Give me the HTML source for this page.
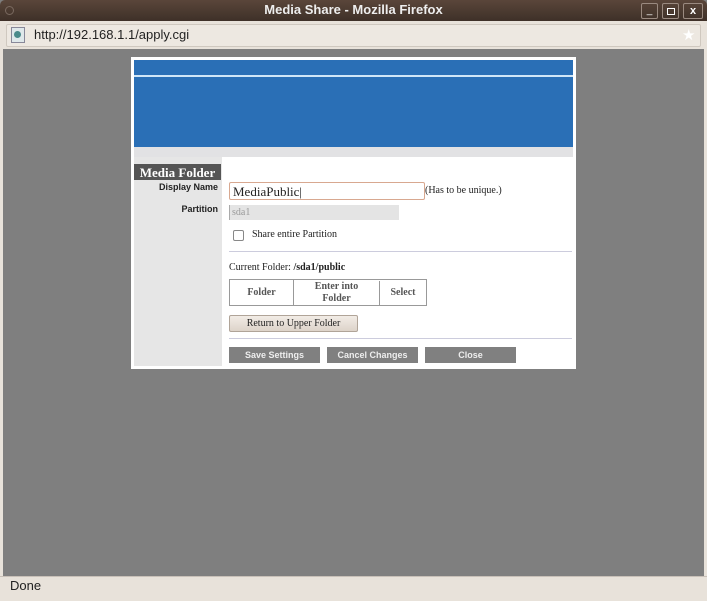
<!DOCTYPE html><html><head><style>
body{margin:0;width:707px;height:600px;overflow:hidden;background:#7f7f7f;font-family:"Liberation Sans",sans-serif;position:relative}
.a{position:absolute}
.serif{font-family:"Liberation Serif",serif}
</style></head><body>
<div class="a" style="left:0;top:0;width:707px;height:21px;background:linear-gradient(#5a463a,#3e3028);border-radius:5px 5px 0 0"></div>
<div class="a" style="left:0;top:2px;width:707px;text-align:center;color:#eee;font-weight:bold;font-size:13px">Media Share - Mozilla Firefox</div>
<div class="a" style="left:5px;top:6px;width:7px;height:7px;border-radius:50%;border:1px solid #7a6a60"></div>
<div class="a" style="left:641px;top:3px;width:15px;height:14px;border:1px solid #9a8a80;border-radius:2px;color:#fff;font-size:10px;text-align:center;line-height:13px">_</div>
<div class="a" style="left:662px;top:3px;width:15px;height:14px;border:1px solid #9a8a80;border-radius:2px"><div style="margin:4px;width:6px;height:5px;border:1px solid #fff"></div></div>
<div class="a" style="left:683px;top:3px;width:18px;height:14px;border:1px solid #9a8a80;border-radius:2px;color:#fff;font-size:11px;text-align:center;line-height:14px;font-weight:bold">x</div>
<div class="a" style="left:0;top:21px;width:707px;height:28px;background:#e8e2da"></div>
<div class="a" style="left:6px;top:24px;width:693px;height:21px;background:#ede8e1;border:1px solid #cfc8bf;border-radius:2px"></div>
<div class="a" style="left:11px;top:27px;width:12px;height:14px;background:#dfe8ea;border:1px solid #889"><div style="margin:3px 2px;width:7px;height:7px;border-radius:50%;background:#4a8a8a"></div></div>
<div class="a" style="left:34px;top:27px;font-size:13px;color:#222">http://192.168.1.1/apply.cgi</div>
<div class="a" style="left:682px;top:26px;color:#fff;font-size:15px">★</div>
<div class="a" style="left:0;top:49px;width:3px;height:527px;background:#e8e2da"></div>
<div class="a" style="left:704px;top:49px;width:3px;height:527px;background:#e8e2da"></div>
<div class="a" style="left:0;top:576px;width:707px;height:24px;background:#e8e2da;border-top:1px solid #c8c0b8"></div>
<div class="a" style="left:10px;top:578px;font-size:13px;color:#222">Done</div>

<div class="a" style="left:131px;top:57px;width:445px;height:312px;background:#fff"></div>
<div class="a" style="left:134px;top:60px;width:439px;height:15px;background:#2a6fb6"></div>
<div class="a" style="left:134px;top:75px;width:439px;height:2px;background:#cfe6f8"></div>
<div class="a" style="left:134px;top:77px;width:439px;height:70px;background:#2a6fb6"></div>
<div class="a" style="left:134px;top:147px;width:439px;height:10px;background:#e2e2e4"></div>
<div class="a" style="left:134px;top:157px;width:88px;height:209px;background:#e6e6e6"></div>
<div class="a serif" style="left:134px;top:164px;width:87px;height:16px;background:#555;color:#fff;font-weight:bold;font-size:13px;text-align:center;line-height:17px">Media Folder</div>
<div class="a" style="left:134px;top:182px;width:84px;text-align:right;font-size:9px;font-weight:bold;color:#222">Display Name</div>
<div class="a" style="left:134px;top:204px;width:84px;text-align:right;font-size:9px;font-weight:bold;color:#222">Partition</div>
<div class="a serif" style="left:229px;top:182px;width:191px;height:16px;border:1px solid #d8a890;border-radius:2px;font-size:13px;line-height:17px;padding-left:3px;color:#222">MediaPublic|</div>
<div class="a serif" style="left:425px;top:185px;font-size:10px;color:#222">(Has to be unique.)</div>
<div class="a serif" style="left:229px;top:205px;width:167px;height:15px;background:#e4e4e4;border-left:1px solid #aaa;font-size:10px;color:#999;line-height:15px;padding-left:2px">sda1</div>
<div class="a" style="left:233px;top:230px;width:9px;height:9px;border:1px solid #888;border-radius:2px"></div>
<div class="a serif" style="left:252px;top:229px;font-size:10px;color:#222">Share entire Partition</div>
<div class="a" style="left:229px;top:251px;width:343px;height:1px;background:#ccd"></div>
<div class="a serif" style="left:229px;top:262px;font-size:10px;color:#222">Current Folder: <b>/sda1/public</b></div>
<div class="a serif" style="left:229px;top:279px;width:196px;height:25px;border:1px solid #999;font-size:10px;font-weight:bold;color:#555">
<div class="a" style="left:0;top:0;width:63px;height:25px;border-right:1px solid #999;text-align:center;line-height:25px">Folder</div>
<div class="a" style="left:64px;top:1px;width:85px;height:24px;border-right:1px solid #999;text-align:center;line-height:12px">Enter into<br>Folder</div>
<div class="a" style="left:150px;top:0;width:46px;text-align:center;line-height:25px">Select</div></div>
<div class="a serif" style="left:229px;top:315px;width:127px;height:15px;border:1px solid #b0a498;border-radius:2px;background:linear-gradient(#f2ece6,#ddd3c9);font-size:10px;text-align:center;line-height:15px;color:#222">Return to Upper Folder</div>
<div class="a" style="left:229px;top:338px;width:343px;height:1px;background:#ccd"></div>
<div class="a" style="left:229px;top:347px;width:91px;height:16px;background:#808080;color:#eee;font-size:9px;font-weight:bold;text-align:center;line-height:16px">Save Settings</div>
<div class="a" style="left:327px;top:347px;width:91px;height:16px;background:#808080;color:#eee;font-size:9px;font-weight:bold;text-align:center;line-height:16px">Cancel Changes</div>
<div class="a" style="left:425px;top:347px;width:91px;height:16px;background:#808080;color:#eee;font-size:9px;font-weight:bold;text-align:center;line-height:16px">Close</div>
</body></html>
